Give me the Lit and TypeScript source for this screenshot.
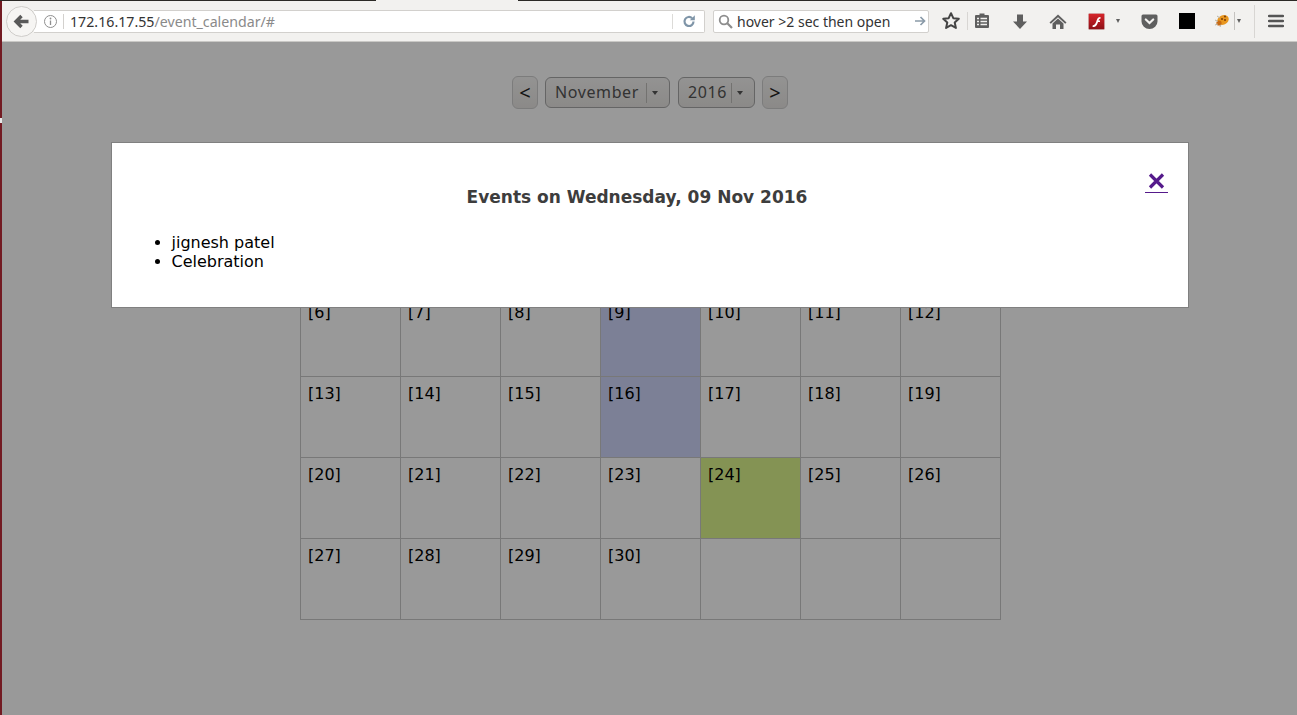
import { LitElement, html, css } from "lit";
import { customElement } from "lit/decorators.js";

const rows: (number | null)[][] = [
  [null, null, 1, 2, 3, 4, 5],
  [6, 7, 8, 9, 10, 11, 12],
  [13, 14, 15, 16, 17, 18, 19],
  [20, 21, 22, 23, 24, 25, 26],
  [27, 28, 29, 30, null, null, null],
];
const marked = [2, 9, 16];

const I = "#5f5f5f";

@customElement("app-root")
export class AppRoot extends LitElement {
  static styles = css`
    :host { display: block; width: 1297px; height: 715px; overflow: hidden; position: relative; background: #fff; font-family: "DejaVu Sans", sans-serif; }
    .strip { position: absolute; left: 0; top: 0; width: 2px; height: 715px; background: #721a22; z-index: 5; }
    .nick { position: absolute; left: 0; top: 118px; width: 2px; height: 5px; background: #e8e8e8; z-index: 6; }
    .topline { position: absolute; left: 0; top: 0; height: 1px; background: #2b2926; z-index: 5; }
    .tl1 { width: 376px; }
    .tl2 { left: 518px; width: 779px; }
    .toolbar { height: 42px; box-sizing: border-box; background: #f2f1ef; border-bottom: 1px solid #c9c8c5; display: flex; align-items: center; padding: 1px 0 0 2px; font-family: "Noto Sans", "Open Sans", sans-serif; position: relative; }
    .back { width: 31px; height: 31px; border-radius: 50%; background: #f6f5f3; border: 1px solid #cfcdca; display: flex; align-items: center; justify-content: center; box-sizing: border-box; position: relative; z-index: 1; margin-left: 4px; flex: none; }
    .url { margin-left: -3px; width: 671px; height: 23px; box-sizing: border-box; background: #fff; border: 1px solid #d2d0cd; border-left: none; border-radius: 0 2px 2px 0; display: flex; align-items: center; font-size: 14.2px; color: #333; flex: none; }
    .info { margin-left: 9px; flex: none; display: block; }
    .sep { width: 1px; height: 15px; background: #d3d1ce; margin: 0 6px 0 5px; flex: none; }
    .url .host { color: #333; }
    .url .path { color: #8a8a8a; }
    .spring { flex: 1; }
    .reload { width: 31px; display: flex; justify-content: center; border-left: 1px solid #dcdbd8; height: 15px; align-items: center; }
    .search { margin-left: 8px; width: 216px; height: 23px; box-sizing: border-box; background: #fff; border: 1px solid #d2d0cd; border-radius: 2px; display: flex; align-items: center; padding: 0 2px 0 3px; font-size: 14px; color: #333; flex: none; }
    .search span { margin-left: 3px; flex: 1; }
    .tools { position: relative; flex: 1; height: 32px; }
    .tools > * { position: absolute; }
    .vsep { background: #d8d6d3; width: 1px; }

    .page { display: flex; flex-direction: column; align-items: center; color: #000; padding-left: 2px; }
    .nav { display: flex; align-items: center; gap: 7px; margin: 34px 0 0 1px; height: 33px; font-family: "Noto Sans", "Open Sans", sans-serif; }
    .btn { box-sizing: border-box; height: 33px; border: 1px solid #cfcfcf; border-radius: 6px; background: linear-gradient(#f6f5f4, #e8e6e3); display: flex; align-items: center; justify-content: center; font-size: 20px; color: #222; width: 26px; }
    .sel { box-sizing: border-box; height: 31px; border: 1px solid #a8a8a8; border-radius: 6px; background: linear-gradient(#f6f5f4, #e8e6e3); display: flex; align-items: center; font-size: 16px; color: #555; letter-spacing: .6px; padding: 0 0 2px 9px; }
    .sel .txt { flex: 1; }
    .sel .div { width: 1px; height: 20px; background: #c0bebb; margin-top: 2px; }
    .sel .caret { width: 0; height: 0; border: 3px solid transparent; border-top: 4px solid #555; border-bottom: none; margin: 2px 0 0 5px; }
    .sel .arrow { width: 22px; display: flex; }
    .m { width: 125px; }
    .y { width: 77px; margin-left: 1px; }
    .cal { border-collapse: collapse; margin: 105px 0 0 2px; table-layout: fixed; width: 701px; font-size: 16px; }
    .cal td { border: 1px solid #c8c8c8; width: 100px; height: 81px; box-sizing: border-box; padding: 7px 7px; vertical-align: top; line-height: 19px; color: #000; }
    .cal td.wed { background: #cfd6fa; }
    .cal td.today { background: #dcf58c; }

    .overlay { position: absolute; left: 0; top: 42px; right: 0; bottom: 0; background: rgba(0, 0, 0, 0.4); display: flex; justify-content: center; align-items: flex-start; padding-left: 2px; }
    .modal { box-sizing: border-box; width: 1078px; height: 166px; margin-top: 100px; background: #fff; border: 1px solid #808080; position: relative; font-size: 16px; color: #000; }
    .modal h2 { margin: 43px 0 0; padding-right: 25px; font-size: 17px; line-height: 22px; font-weight: 700; text-align: center; color: #3d3d3d; }
    .modal ul { margin: 25px 0 0; padding: 0 0 0 60px; line-height: 19px; }
    .close { position: absolute; right: 20px; top: 23px; width: 23px; height: 27px; border-bottom: 1.5px solid #551a8b; box-sizing: border-box; display: flex; justify-content: center; padding-top: 7px; text-decoration: none; }
  `;

  private toolIcons() {
    return html`
      <svg style="left:12px;top:6px" width="20" height="20" viewBox="0 0 20 20"><path d="M10 2.2l2.3 5 5.500.6-4.100 3.700 1.200 5.400L10 14.200l-4.900 2.700 1.200-5.400L2.200 7.800l5.500-.6z" fill="none" stroke="#444" stroke-width="2" stroke-linejoin="round"/></svg>
      <div class="vsep" style="left:38px;top:7px;height:18px"></div>
      <svg style="left:45px;top:7px" width="16" height="18" viewBox="0 0 16 18"><path d="M5.500 3V1.500h5V3H14a1 1 0 0 1 1 1v11a1 1 0 0 1-1 1H2a1 1 0 0 1-1-1V4a1 1 0 0 1 1-1z" fill="${I}"/><path d="M3 6.500h2M6.500 6.500H13M3 9.500h2M6.500 9.500H13M3 12.500h2M6.500 12.500H13" stroke="#f2f1ef" stroke-width="1.400"/></svg>
      <svg style="left:83px;top:8px" width="16" height="18" viewBox="0 0 16 18"><path d="M5 1.500h6v7h4l-7 7.500-7-7.500h4z" fill="${I}"/></svg>
      <svg style="left:120px;top:8px" width="18" height="18" viewBox="0 0 18 18"><path d="M9 1.500L17.500 9.500l-1.300 1.200L9 4.200 1.800 10.700.5 9.500z" fill="${I}"/><path d="M3.500 10.500L9 5.500l5.500 5V16H11v-4.500H7V16H3.500z" fill="${I}"/></svg>
      <svg style="left:159px;top:8px" width="17" height="17" viewBox="0 0 17 17"><defs><linearGradient id="fl" x1="0" y1="0" x2="0" y2="1"><stop offset="0" stop-color="#d8262b"/><stop offset="1" stop-color="#8c0f16"/></linearGradient></defs><rect x=".5" y=".5" width="16" height="16" rx="1" fill="url(#fl)" stroke="#c9a8a8" stroke-width=".6"/><path d="M12.500 4c-2.600 0-3.200 1.600-3.900 3.600C8 9.600 7.400 12 4.600 12.500v1.600c3.600 0 4.700-2.600 5.400-5.100h2V7.400h-1.500c.4-1 .9-1.700 2-1.700z" fill="#fff"/></svg>
      <div style="left:187px;top:14px;width:0;height:0;border:2.500px solid transparent;border-top:4px solid ${I};border-bottom:none"></div>
      <svg style="left:212px;top:8px" width="17" height="17" viewBox="0 0 17 17"><path d="M2 1.500h13a1.500 1.500 0 0 1 1.500 1.500v5.500a8 7.500 0 0 1-16 0V3A1.500 1.500 0 0 1 2 1.500z" fill="${I}"/><path d="M4.800 6.500l3.700 3.500 3.700-3.500" fill="none" stroke="#f2f1ef" stroke-width="2.200" stroke-linecap="round"/></svg>
      <div style="left:250px;top:8px;width:16px;height:16px;background:#000"></div>
      <svg style="left:285px;top:7px" width="17" height="17" viewBox="0 0 17 17"><ellipse cx="9" cy="8" rx="6" ry="4.600" transform="rotate(-25 9 8)" fill="#e8971f"/><circle cx="5" cy="11" r="2.600" fill="#c96a12"/><circle cx="8" cy="7" r="1" fill="#7a3a08"/><circle cx="11" cy="8" r="1" fill="#7a3a08"/><circle cx="11" cy="4.500" r="1" fill="#7a3a08"/><path d="M1 8l3 1.500M1 13l3-1M6 15l1-2.500M3 4l3 2" stroke="#b9b3a4" stroke-width="1"/></svg>
      <div class="vsep" style="left:305px;top:7px;height:18px;background:#c5c3c0"></div>
      <div style="left:308px;top:14px;width:0;height:0;border:2.500px solid transparent;border-top:4px solid ${I};border-bottom:none"></div>
      <div class="vsep" style="left:325px;top:0;height:33px"></div>
      <svg style="left:339px;top:9px" width="16" height="14" viewBox="0 0 16 14"><path d="M1 2h14M1 7h14M1 12h14" stroke="#555" stroke-width="2.400" stroke-linecap="round"/></svg>
    `;
  }

  render() {
    return html`
      <div class="strip"></div>
      <div class="nick"></div>
      <div class="topline tl1"></div>
      <div class="topline tl2"></div>
      <div class="toolbar">
        <div class="back">
          <svg width="17" height="17" viewBox="0 0 17 17"><path d="M8.500 3L3 8.500 8.500 14M4 8.500h11.500" fill="none" stroke="#595959" stroke-width="3.400"/></svg>
        </div>
        <div class="url">
          <svg class="info" width="15" height="15" viewBox="0 0 15 15"><circle cx="7.500" cy="7.500" r="6" fill="none" stroke="#8f8f8f" stroke-width="1"/><path d="M7.500 6.500V11" stroke="#8f8f8f" stroke-width="1.300"/><circle cx="7.500" cy="4.500" r=".9" fill="#8f8f8f"/></svg>
          <div class="sep"></div>
          <span><span class="host">172.16.17.55</span><span class="path">/event_calendar/#</span></span>
          <div class="spring"></div>
          <div class="reload">
            <svg width="14" height="14" viewBox="0 0 14 14"><path d="M11.500 7.500a4.500 4.500 0 1 1-1.400-3.300" fill="none" stroke="#7f95a8" stroke-width="2.200"/><path d="M12.800 1.200v5h-5z" fill="#7f95a8"/></svg>
          </div>
        </div>
        <div class="search">
          <svg width="17" height="17" viewBox="0 0 17 17"><circle cx="7" cy="7" r="4.300" fill="none" stroke="#8d8d8d" stroke-width="1.800"/><path d="M10.300 10.300L15 15" stroke="#8d8d8d" stroke-width="2.200"/></svg>
          <span>hover &gt;2 sec then open</span>
          <svg width="12" height="12" viewBox="0 0 12 12"><path d="M1 6h9M6.500 2L10.500 6l-4 4" fill="none" stroke="#8a9aa8" stroke-width="1.700"/></svg>
        </div>
        <div class="tools">${this.toolIcons()}</div>
      </div>
      <div class="page">
        <div class="nav">
          <div class="btn">&lt;</div>
          <div class="sel m"><span class="txt">November</span><span class="div"></span><span class="arrow"><span class="caret"></span></span></div>
          <div class="sel y"><span class="txt">2016</span><span class="div"></span><span class="arrow"><span class="caret"></span></span></div>
          <div class="btn">&gt;</div>
        </div>
        <table class="cal">
          ${rows.map(
            (r) => html`<tr>${r.map((d) => html`<td class="${d && marked.includes(d) ? "wed" : ""} ${d === 24 ? "today" : ""}">${d ? `[${d}]` : ""}</td>`)}</tr>`
          )}
        </table>
      </div>
      <div class="overlay">
        <div class="modal">
          <h2>Events on Wednesday, 09 Nov 2016</h2>
          <ul><li>jignesh patel</li><li>Celebration</li></ul>
          <a class="close" href="#">
            <svg width="17" height="16" viewBox="0 0 17 16"><path d="M2 1.500l13 13M15 1.500L2 14.500" stroke="#551a8b" stroke-width="3.200"/></svg>
          </a>
        </div>
      </div>
    `;
  }
}
